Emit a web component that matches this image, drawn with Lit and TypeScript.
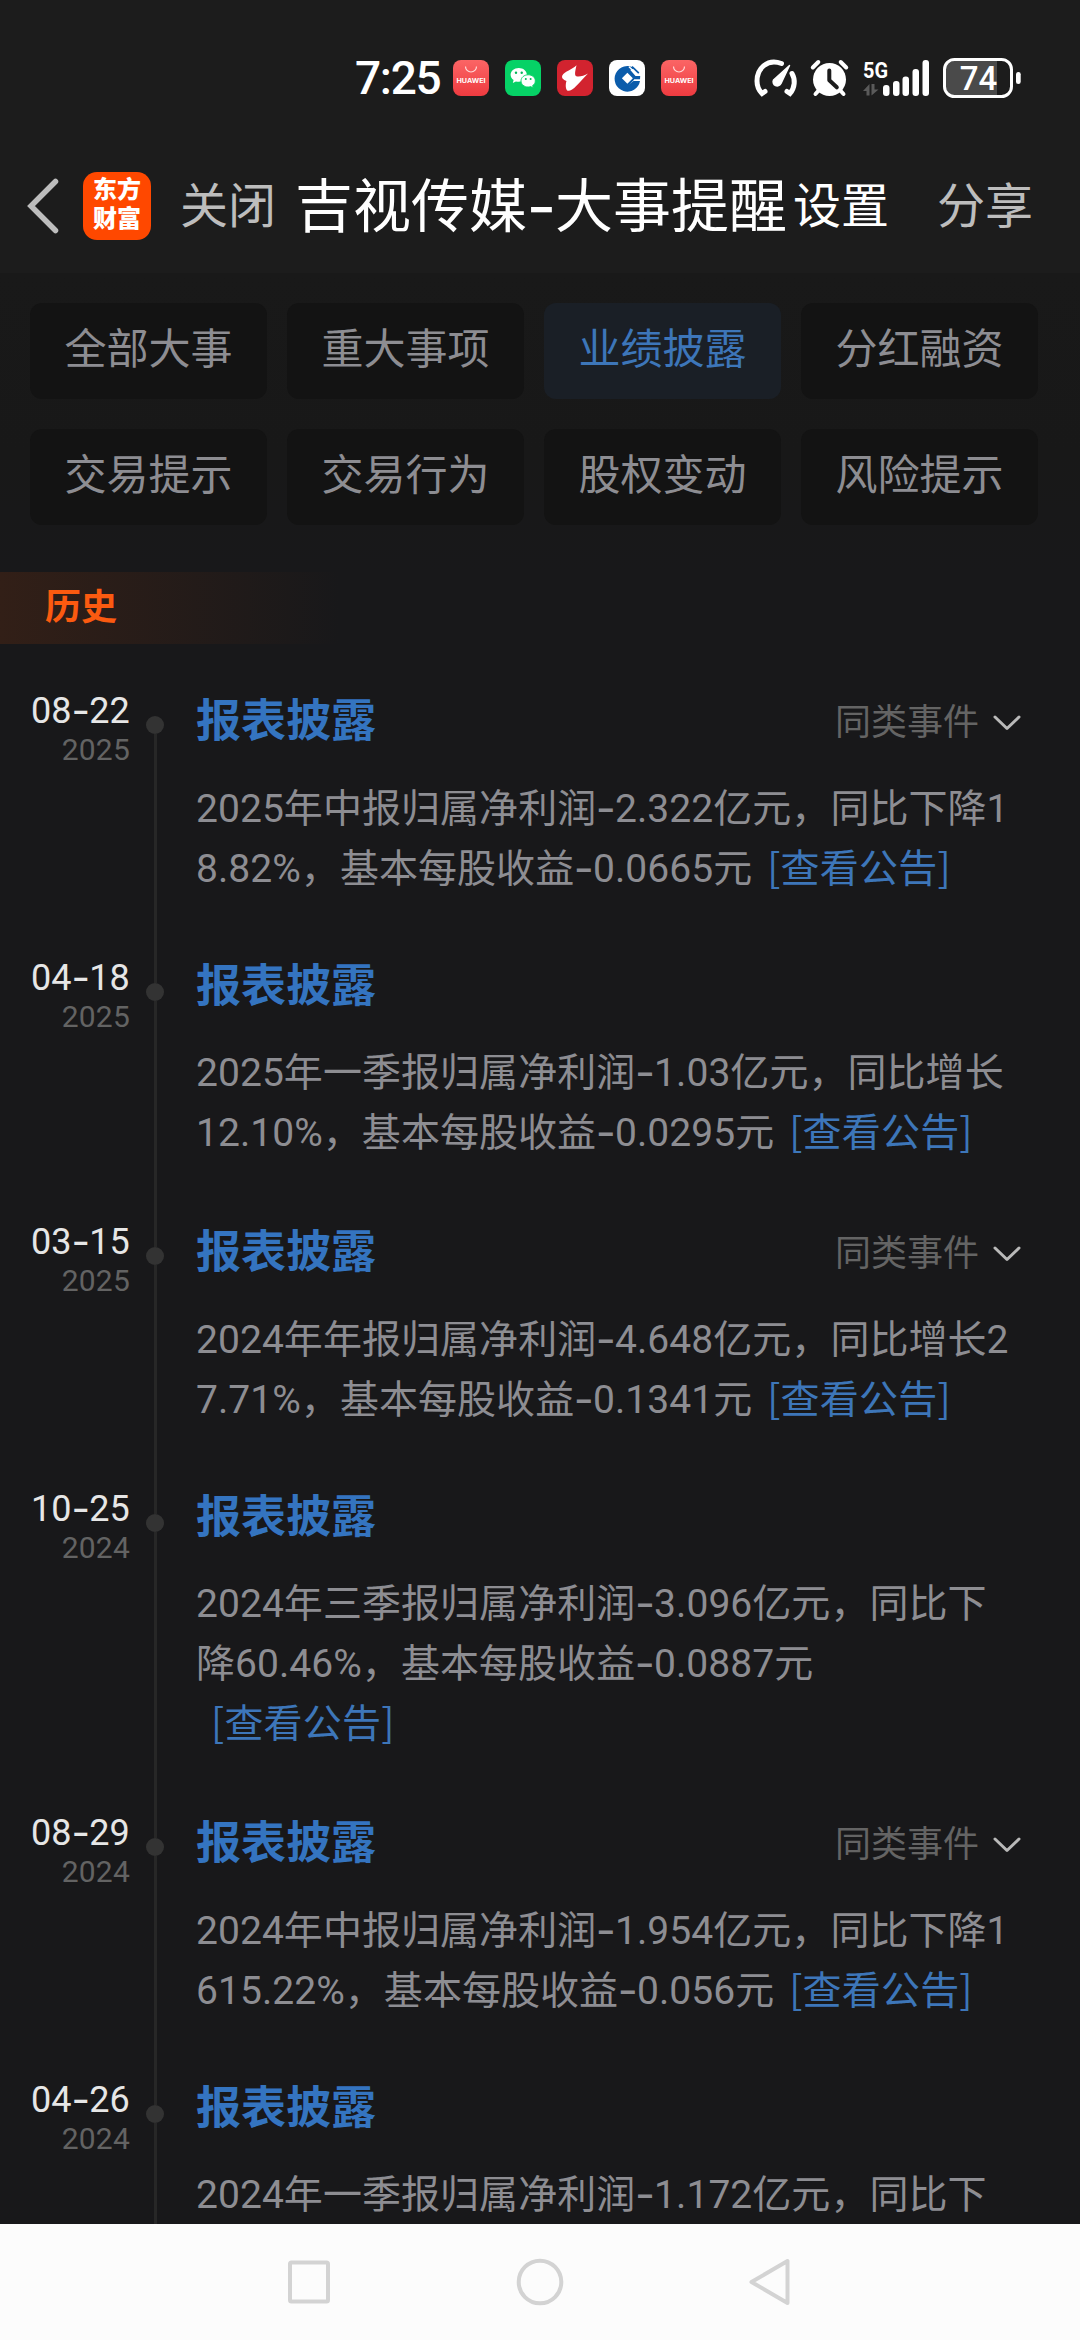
import { LitElement, html, css, svg, nothing } from "lit";
import { customElement, property } from "lit/decorators.js";
import { classMap } from "lit/directives/class-map.js";

interface EventItem {
  date: string;
  year: string;
  similar?: boolean;
  lines: string[];
  linkOwnLine?: boolean;
  noLink?: boolean;
}

const TABS = ["全部大事", "重大事项", "业绩披露", "分红融资", "交易提示", "交易行为", "股权变动", "风险提示"];

const EVENTS: EventItem[] = [
  { date: "08-22", year: "2025", similar: true, lines: ["2025年中报归属净利润-2.322亿元，同比下降1", "8.82%，基本每股收益-0.0665元"] },
  { date: "04-18", year: "2025", lines: ["2025年一季报归属净利润-1.03亿元，同比增长", "12.10%，基本每股收益-0.0295元"] },
  { date: "03-15", year: "2025", similar: true, lines: ["2024年年报归属净利润-4.648亿元，同比增长2", "7.71%，基本每股收益-0.1341元"] },
  { date: "10-25", year: "2024", lines: ["2024年三季报归属净利润-3.096亿元，同比下", "降60.46%，基本每股收益-0.0887元"], linkOwnLine: true },
  { date: "08-29", year: "2024", similar: true, lines: ["2024年中报归属净利润-1.954亿元，同比下降1", "615.22%，基本每股收益-0.056元"] },
  { date: "04-26", year: "2024", lines: ["2024年一季报归属净利润-1.172亿元，同比下"], noLink: true },
];

/** Sets each hyphen in a wider box than the text font gives it. */
const dashed = (text: string) =>
  text.split("-").map((part, i) => (i ? html`<span class="dash">-</span>${part}` : part));

const dashStyle = css`
  .dash {
    display: inline-block;
    width: 0.43em;
    text-align: center;
    font-family: Inter, sans-serif;
    font-size: 1.12em;
    line-height: 0.6;
    vertical-align: -0.045em;
    text-indent: -0.01em;
  }
`;

const bagIcon = html`<svg class="app" viewBox="0 0 36 36">
  <defs>
    <linearGradient id="bag" x1="0" y1="0" x2="0" y2="1">
      <stop offset="0" stop-color="#fb6565" /><stop offset="1" stop-color="#ee3b40" />
    </linearGradient>
  </defs>
  <rect width="36" height="36" rx="8" fill="url(#bag)" />
  <path d="M12.5 6.5a5.5 5.5 0 0 0 11 0" fill="none" stroke="#ffd9d9" stroke-width="1.2" />
  <text x="18" y="23.2" text-anchor="middle" textLength="29" lengthAdjust="spacingAndGlyphs" class="brand">HUAWEI</text>
</svg>`;

@customElement("status-bar")
export class StatusBar extends LitElement {
  static styles = css`
    :host {
      display: flex;
      align-items: center;
      height: 40px;
      padding: 58px 59px 43px 355px;
      color: #fff;
      font-family: Roboto, sans-serif;
    }
    .time {
      width: 98px;
      font-size: 46px;
      font-weight: 500;
      line-height: 40px;
      letter-spacing: -1.3px;
    }
    .apps {
      display: flex;
      gap: 16px;
      width: 301px;
    }
    .app {
      width: 36px;
      height: 36px;
      display: block;
    }
    .brand {
      font: 700 6.6px Inter, sans-serif;
      fill: #fff;
    }
    .sys {
      display: block;
      width: 267px;
      height: 40px;
      flex: none;
    }
    .net {
      font: 700 22px Roboto, sans-serif;
      fill: #fff;
    }
    .level {
      font: 500 33px Roboto, sans-serif;
      fill: #fff;
    }
  `;

  render() {
    const bars = [
      [883, 85],
      [893, 81],
      [902.5, 76.5],
      [912.5, 69],
      [922.5, 60],
    ];
    return html`
      <div class="time">7:25</div>
      <div class="apps">
        ${bagIcon}
        <svg class="app" viewBox="0 0 36 36">
          <rect width="36" height="36" rx="8" fill="#06d266" />
          <path d="M13.8 8C9 8 5.600 11 5.600 14.800c0 2.200 1.100 4 3 5.300l-.8 2.900 3.100-1.600c1 .3 1.900.4 2.900.4 4.500 0 8-3 8-7S18.300 8 13.800 8z" fill="#fff" />
          <path d="M23.200 14.800c-4.100 0-7.200 2.700-7.200 6.100s3.100 6.100 7.200 6.100c.9 0 1.700-.1 2.500-.4l2.600 1.400-.7-2.400c1.700-1.100 2.700-2.800 2.700-4.700 0-3.400-3-6.100-7.100-6.100z" fill="#fff" stroke="#06d266" stroke-width=".9" />
          <circle cx="11" cy="12.800" r="1.200" fill="#06b65a" /><circle cx="16.700" cy="12.800" r="1.200" fill="#06b65a" />
          <circle cx="20.800" cy="19" r="1" fill="#06b65a" /><circle cx="25.600" cy="19" r="1" fill="#06b65a" />
        </svg>
        <svg class="app" viewBox="0 0 36 36">
          <rect width="36" height="36" rx="8" fill="#d2232f" />
          <path d="M19.500 5.300C15.500 9.500 7.500 11.500 5.300 15.500c-1 2.800 1 4 4.200 5.500-1.200 3.500-1 8.500 1.200 9.800 5 .7 10.500-7 20.300-17.300-4 2.200-8.800 3.800-11.700 2.700-2-1-1.200-4.500.2-10.900z" fill="#fff" />
        </svg>
        <svg class="app" viewBox="0 0 36 36">
          <rect width="36" height="36" rx="8" fill="#fff" />
          <path d="M25.500 8.200A12.800 12.800 0 1 0 31 21h-6.500l-6 4.500-7.300-7.200 7.300-7.300z" fill="#0b5cab" />
          <path d="M17.500 9.500L9.500 18l8.900 8.500 5.500-5.500 2-2.500z" fill="#0b5cab" />
          <path d="M18.400 12.700l5.500 5.500-5.500 5.500-5.500-5.500z" fill="#fff" />
          <path d="M17 9.500l8.500 9.800H31l.2-3.300h-4.700L20 8.500z" fill="#0b5cab" />
          <path d="M20 6.700l8.500 8.100h3" stroke="#fff" stroke-width="1.400" fill="none" />
          <path d="M23 6.600l6.800 6.600" stroke="#0b5cab" stroke-width="1.700" fill="none" />
        </svg>
        ${bagIcon}
      </div>
      <svg class="sys" viewBox="754 58 267 40">
        <g fill="none" stroke="#fff" stroke-width="5" stroke-linecap="round">
          <path d="M781.500 63.500C767 58 757 69 757 81c0 5 2 9.500 5 12.500l3-2" />
          <path d="M792 73.500c3.500 6 3 14-2 20l-3-2" />
        </g>
        <path d="M789.500 65.500l-8.500 18a4 4 0 1 1-7.500-3.500z" fill="#fff" stroke="#fff" stroke-width="1.500" stroke-linejoin="round" />
        <circle cx="829.500" cy="79.500" r="16.500" fill="#fff" />
        <g fill="none" stroke="#fff" stroke-width="4" stroke-linecap="round">
          <path d="M812.800 67.500l5.500-5.500M846.200 67.500l-5.500-5.500M819.500 89.500l-4 4.500M839.500 89.500l4 4.500" />
        </g>
        <path d="M829.300 70.500v9.800l7.500 7" fill="none" stroke="#1c1c1c" stroke-width="4" stroke-linecap="round" stroke-linejoin="round" />
        <text class="net" x="863" y="77.500" textLength="25" lengthAdjust="spacingAndGlyphs">5G</text>
        <g fill="#5a5a5a">
          <path d="M863 91l6.500-7v11.500h-3V91zM871.500 84h3v5.500h4l-7 6z" />
        </g>
        ${bars.map(([x, y]) => svg`<rect x=${x} y=${y} width="6.500" height=${96 - y} rx="3" fill="#fff" />`)}
        <path d="M954 61h43v34h-43a9 9 0 0 1-9-9V70a9 9 0 0 1 9-9z" fill="#4a4a4a" />
        <rect x="944.500" y="59.500" width="67" height="37" rx="10" fill="none" stroke="#fff" stroke-width="3" />
        <rect x="1016" y="72" width="4.700" height="12" rx="2.300" fill="#fff" />
        <text class="level" x="978.500" y="90" text-anchor="middle">74</text>
      </svg>
    `;
  }
}

@customElement("title-bar")
export class TitleBar extends LitElement {
  static styles = [
    dashStyle,
    css`
      :host {
        display: flex;
        align-items: center;
        height: 132px;
        padding-left: 26px;
        font-size: 48px;
        line-height: 60px;
        color: #bdbdbd;
        white-space: nowrap;
      }
      .back {
        width: 33px;
        height: 56px;
        margin: 0 24px 2px 0;
      }
      .logo {
        width: 68px;
        height: 68px;
        padding: 4px 0 5px;
        box-sizing: border-box;
        border-radius: 14px;
        margin: 0 29px 2px 0;
        background: #ff4800;
        color: #fff;
        font-size: 24px;
        font-weight: 900;
        line-height: 29px;
        text-align: center;
      }
      .title {
        margin: 0 6px 0 19px;
        font-size: 58px;
        color: #fff;
      }
      .set {
        color: #fff;
        margin-right: 48px;
      }
    `,
  ];

  render() {
    return html`
      <svg class="back" viewBox="0 0 33 56">
        <path d="M29.500 3.500L5 28l24.500 24.500" fill="none" stroke="#bdbdbd" stroke-width="5.500" stroke-linecap="round" />
      </svg>
      <div class="logo">东方<br />财富</div>
      <span>关闭</span>
      <span class="title">${dashed("吉视传媒-大事提醒")}</span>
      <span class="set">设置</span>
      <span>分享</span>
    `;
  }
}

@customElement("event-row")
export class EventRow extends LitElement {
  static styles = [
    dashStyle,
    css`
      :host {
        display: grid;
        grid-template-columns: 130px 18px 1fr;
        column-gap: 16px;
      }
      .when {
        text-align: right;
        white-space: nowrap;
      }
      .date {
        height: 40px;
        font-size: 36px;
        line-height: 40px;
        letter-spacing: 0.2px;
        color: #e6e6e6;
      }
      .year {
        margin-top: 1px;
        font-size: 30px;
        line-height: 36px;
        letter-spacing: 0.2px;
        color: #636363;
      }
      .track {
        display: flex;
        flex-direction: column;
        align-items: center;
      }
      .stem {
        width: 3px;
        height: 25px;
        background: #272727;
      }
      .stem.first {
        background: none;
      }
      .stem.rest {
        flex: 1;
      }
      .dot {
        width: 18px;
        height: 18px;
        border-radius: 50%;
        background: #333;
      }
      .main {
        padding-left: 16px;
        padding-bottom: 59px;
      }
      .head {
        display: flex;
        justify-content: space-between;
        align-items: center;
        height: 60px;
        margin-bottom: 25px;
        padding-right: 59px;
      }
      .head.tall {
        height: 63px;
      }
      .name {
        font-size: 45px;
        font-weight: 700;
        line-height: 60px;
        color: #3474c0;
        margin-top: -2px;
      }
      .similar {
        display: flex;
        align-items: center;
        gap: 14px;
        font-size: 36px;
        line-height: 40px;
        color: #646464;
      }
      .chev {
        width: 28px;
        height: 16px;
      }
      .line {
        height: 60px;
        font-size: 39px;
        line-height: 60px;
        color: #8d8d92;
        letter-spacing: 0.05px;
        white-space: nowrap;
      }
      .link {
        margin-left: 15px;
        color: #3d76b9;
        font-family: "Noto Sans CJK SC", sans-serif;
        letter-spacing: 0.2px;
        line-height: 1;
      }
    `,
  ];

  @property({ attribute: false }) item!: EventItem;
  @property({ type: Boolean }) first = false;

  render() {
    const { date, year, similar, lines, linkOwnLine, noLink } = this.item;
    const link = html`<span class="link">[查看公告]</span>`;
    return html`
      <div class="when">
        <div class="date">${dashed(date)}</div>
        <div class="year">${year}</div>
      </div>
      <div class="track">
        <div class=${classMap({ stem: true, first: this.first })}></div>
        <div class="dot"></div>
        <div class="stem rest"></div>
      </div>
      <div class="main">
        <div class=${classMap({ head: true, tall: !!similar })}>
          <span class="name">报表披露</span>
          ${similar
            ? html`<span class="similar">同类事件
                <svg class="chev" viewBox="0 0 28 16">
                  <path d="M2 2l12 11.500L26 2" fill="none" stroke="#b9b9b9" stroke-width="3" stroke-linecap="round" stroke-linejoin="round" />
                </svg></span>`
            : nothing}
        </div>
        ${lines.map(
          (l, i) => html`<div class="line">${dashed(l)}${i === lines.length - 1 && !linkOwnLine && !noLink ? link : nothing}</div>`
        )}
        ${linkOwnLine ? html`<div class="line">${link}</div>` : nothing}
      </div>
    `;
  }
}

@customElement("app-root")
export class AppRoot extends LitElement {
  static styles = css`
    :host {
      display: flex;
      flex-direction: column;
      width: 1080px;
      height: 2340px;
      overflow: hidden;
      background: #18181a;
      font-family: Roboto, "Noto Sans CJK SC", sans-serif;
    }
    .top {
      flex: none;
      background: #1c1c1c;
    }
    .tabs {
      flex: none;
      display: grid;
      grid-template-columns: repeat(4, 237px);
      grid-auto-rows: 96px;
      gap: 30px 20px;
      padding: 30px 30px 47px;
      background: linear-gradient(#191919, #181818 60%, #18181a);
    }
    .tab {
      display: flex;
      align-items: center;
      justify-content: center;
      box-sizing: border-box;
      padding-bottom: 3px;
      border-radius: 12px;
      background: #131313;
      color: #8d8d92;
      font-size: 42px;
      line-height: 60px;
    }
    .tab.on {
      background: #1a1f26;
      color: #3d76b9;
    }
    .section {
      flex: none;
      height: 72px;
      padding-left: 45px;
      background: linear-gradient(90deg, #321f17, #18181a 340px);
      color: #fb5a10;
      font-size: 36px;
      font-weight: 700;
      line-height: 72px;
    }
    .list {
      flex: 1;
      min-height: 0;
      overflow: hidden;
      padding-top: 47px;
    }
    .nav {
      flex: none;
      height: 116px;
      background: #fcfcfc;
      display: flex;
      align-items: center;
      justify-content: center;
      gap: 183px;
    }
    .nav svg {
      display: block;
      width: 48px;
      height: 48px;
      fill: none;
      stroke: #d3d3d3;
      stroke-width: 4;
      stroke-linejoin: round;
    }
  `;

  render() {
    return html`
      <div class="top">
        <status-bar></status-bar>
        <title-bar></title-bar>
      </div>
      <div class="tabs">
        ${TABS.map((t, i) => html`<div class=${classMap({ tab: true, on: i === 2 })}>${t}</div>`)}
      </div>
      <div class="section">历史</div>
      <div class="list">
        ${EVENTS.map((e, i) => html`<event-row .item=${e} ?first=${i === 0}></event-row>`)}
      </div>
      <div class="nav">
        <svg viewBox="0 0 48 48"><rect x="5" y="4.500" width="38" height="39" rx="1.500" /></svg>
        <svg viewBox="0 0 48 48"><circle cx="24" cy="24" r="21.300" /></svg>
        <svg viewBox="0 0 48 48"><path d="M40.500 3v42L4.500 24z" /></svg>
      </div>
    `;
  }
}
